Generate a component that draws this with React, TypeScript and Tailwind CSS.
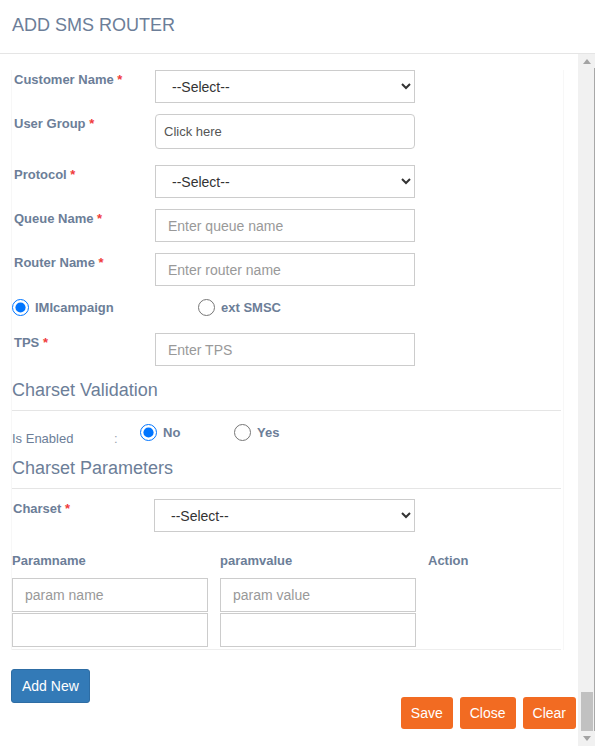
import React from "react";

const LBL = "text-[#6c7e98]";

function Label({ text, req = true, w = "w-[141px]" }: { text: string; req?: boolean; w?: string }) {
  return (
    <div className={`${w} shrink-0 pt-[2px] text-[13px] leading-[15px] font-bold ${LBL}`}>
      {text}
      {req && <span className="text-[#f03c3c]"> *</span>}
    </div>
  );
}

function Select({ w = "w-[260px]" }: { w?: string }) {
  return (
    <select
      defaultValue="s"
      className={`${w} h-[33px] border border-[#cccccc] bg-white pl-[12px] text-[14px] text-[#333333] outline-none`}
    >
      <option value="s">--Select--</option>
    </select>
  );
}

function TextInput({ ph, h = "h-[33px]", extra = "" }: { ph: string; h?: string; extra?: string }) {
  return (
    <input
      placeholder={ph}
      className={`w-[260px] ${h} border border-[#cccccc] bg-white px-[12px] text-[14px] text-[#333333] placeholder:text-[#999999] outline-none ${extra}`}
    />
  );
}

function Radio({ name, checked, label }: { name: string; checked?: boolean; label: string }) {
  return (
    <label className="flex items-center gap-[6px]">
      <input type="radio" name={name} defaultChecked={checked} className="m-0 w-[17px] h-[17px]" />
      <span className={`text-[13px] leading-[15px] font-bold ${LBL}`}>{label}</span>
    </label>
  );
}

function Heading({ text }: { text: string }) {
  return <div className={`text-[18px] leading-[20px] ${LBL}`}>{text}</div>;
}

function Scrollbar() {
  return (
    <div className="w-[17px] shrink-0 flex flex-col bg-[#f1f1f1]">
      <div className="h-[14px] flex items-center justify-center">
        <svg width="8" height="5" viewBox="0 0 8 5">
          <polygon points="0,5 8,5 4,0" fill="#a3a3a3" />
        </svg>
      </div>
      <div className="flex-1 flex flex-col justify-end border-r border-[#a8a8a8]">
        <div className="ml-[3px] w-[12px] h-[39px] bg-[#c1c1c1]" />
      </div>
      <div className="h-[15px] flex items-center justify-center">
        <svg width="8" height="5" viewBox="0 0 8 5">
          <polygon points="0,0 8,0 4,5" fill="#a3a3a3" />
        </svg>
      </div>
    </div>
  );
}

export default function App() {
  return (
    <div className="w-[595px] h-[746px] overflow-hidden bg-white font-['Liberation_Sans',Arial,sans-serif]">
      <div className="h-[54px] border-b border-[#e5e5e5] px-[12px] pt-[15px]">
        <div className={`text-[18px] leading-[20px] ${LBL}`}>ADD SMS ROUTER</div>
      </div>
      <div className="flex h-[692px]">
        <div className="flex-1 overflow-hidden">
          <div className="ml-[11px] mr-[14px] mt-[16px] border-x border-[#f7f7f7]">
            <div className="pl-[2px] flex">
              <Label text="Customer Name" />
              <Select />
            </div>
            <div className="pl-[2px] flex mt-[11px]">
              <Label text="User Group" />
              <input
                placeholder="Click here"
                className="w-[260px] h-[35px] rounded-[4px] border border-[#cccccc] bg-white px-[8px] text-[13px] text-[#555555] placeholder:text-[#555555] outline-none"
              />
            </div>
            <div className="pl-[2px] flex mt-[16px]">
              <Label text="Protocol" />
              <Select />
            </div>
            <div className="pl-[2px] flex mt-[11px]">
              <Label text="Queue Name" />
              <TextInput ph="Enter queue name" />
            </div>
            <div className="pl-[2px] flex mt-[11px]">
              <Label text="Router Name" />
              <TextInput ph="Enter router name" />
            </div>
            <div className="flex mt-[13px] h-[17px] items-center">
              <div className="w-[186px]">
                <Radio name="type" checked label="IMIcampaign" />
              </div>
              <Radio name="type" label="ext SMSC" />
            </div>
            <div className="pl-[2px] flex mt-[17px]">
              <Label text="TPS" />
              <TextInput ph="Enter TPS" />
            </div>

            <div className="mt-[14px]">
              <Heading text="Charset Validation" />
            </div>
            <div className="mt-[10px] mr-[2px] border-t border-[#e5e5e5]" />

            <div className="flex mt-[13px] h-[20px] items-start">
              <div className={`w-[102px] pt-[7px] text-[13px] leading-[15px] ${LBL}`}>Is Enabled</div>
              <div className="w-[26px] pt-[7px] text-[13px] leading-[15px] text-[#9aa3b0]">:</div>
              <div className="w-[94px]">
                <Radio name="enabled" checked label="No" />
              </div>
              <Radio name="enabled" label="Yes" />
            </div>

            <div className="mt-[14px]">
              <Heading text="Charset Parameters" />
            </div>
            <div className="mt-[10px] mr-[2px] border-t border-[#e5e5e5]" />

            <div className="pl-[1px] flex mt-[10px]">
              <Label text="Charset" w="w-[141px]" />
              <Select w="w-[261px]" />
            </div>

            <div className={`flex gap-[12px] mt-[21px] text-[13px] leading-[15px] font-bold ${LBL}`}>
              <div className="w-[196px]">Paramname</div>
              <div className="w-[196px]">paramvalue</div>
              <div>Action</div>
            </div>
            <div className="mt-[10px] flex flex-col gap-[1px]">
              <div className="flex gap-[12px]">
                <input
                  placeholder="param name"
                  className="w-[196px] h-[34px] border border-[#cccccc] px-[12px] text-[14px] placeholder:text-[#999999] outline-none"
                />
                <input
                  placeholder="param value"
                  className="w-[196px] h-[34px] border border-[#cccccc] px-[12px] text-[14px] placeholder:text-[#999999] outline-none"
                />
              </div>
              <div className="flex gap-[12px]">
                <input className="w-[196px] h-[34px] border border-[#cccccc] px-[12px] text-[14px] outline-none" />
                <input className="w-[196px] h-[34px] border border-[#cccccc] px-[12px] text-[14px] outline-none" />
              </div>
            </div>
            <div className="mt-[2px] mr-[2px] border-t border-[#eeeeee]" />
          </div>

          <div className="flex justify-between items-start pl-[11px] pr-[2px] mt-[19px]">
            <button className="h-[34px] px-[10px] rounded-[3px] border border-[#2e6da4] bg-[#337ab7] text-white text-[14px]">
              Add New
            </button>
            <div className="flex gap-[7px] mt-[28px]">
              <button className="h-[32px] px-[10px] rounded-[3px] bg-[#f26b22] text-white text-[14px]">Save</button>
              <button className="h-[32px] px-[10px] rounded-[3px] bg-[#f26b22] text-white text-[14px]">Close</button>
              <button className="h-[32px] px-[10px] rounded-[3px] bg-[#f26b22] text-white text-[14px]">Clear</button>
            </div>
          </div>
        </div>
        <Scrollbar />
      </div>
    </div>
  );
}
